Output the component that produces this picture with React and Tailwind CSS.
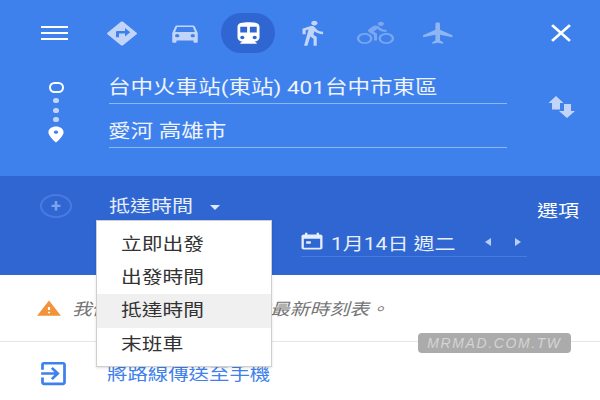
const P = {
  dir: "M21.71 11.29l-9-9c-.39-.39-1.02-.39-1.41 0l-9 9c-.39.39-.39 1.02 0 1.41l9 9c.39.39 1.02.39 1.41 0l9-9c.39-.38.39-1.01 0-1.41zM14 14.5V12h-4v3H8v-4c0-.55.45-1 1-1h5V7.5l3.5 3.5-3.5 3.5z",
  car: "M18.92 6.01C18.72 5.42 18.16 5 17.5 5h-11c-.66 0-1.21.42-1.42 1.01L3 12v8c0 .55.45 1 1 1h1c.55 0 1-.45 1-1v-1h12v1c0 .55.45 1 1 1h1c.55 0 1-.45 1-1v-8l-2.08-5.99zM6.5 16c-.83 0-1.5-.67-1.5-1.5S5.67 13 6.5 13s1.5.67 1.5 1.5S7.33 16 6.5 16zm11 0c-.83 0-1.5-.67-1.5-1.5s.67-1.5 1.5-1.5 1.5.67 1.5 1.5-.67 1.5-1.5 1.5zM5 11l1.5-4.5h11L19 11H5z",
  train: "M12 2c-4.42 0-8 .5-8 4v9.5C4 17.43 5.57 19 7.5 19L6 20.5v.5h12v-.5L16.5 19c1.93 0 3.5-1.57 3.5-3.5V6c0-3.5-3.58-4-8-4zM7.5 17c-.83 0-1.5-.67-1.5-1.5S6.67 14 7.5 14s1.5.67 1.5 1.5S8.33 17 7.5 17zm3.5-6H6V6h5v5zm5.5 6c-.83 0-1.5-.67-1.5-1.5s.67-1.5 1.5-1.5 1.5.67 1.5 1.5-.67 1.5-1.5 1.5zm1.5-6h-5V6h5v5z",
  walk: "M13.5 5.5c1.1 0 2-.9 2-2s-.9-2-2-2-2 .9-2 2 .9 2 2 2zM9.8 8.9L7 23h2.1l1.8-8 2.1 2v6h2v-7.5l-2.1-2 .6-3C14.8 12 16.8 13 19 13v-2c-1.9 0-3.5-1-4.3-2.4l-1-1.6c-.4-.6-1-1-1.7-1-.3 0-.5.1-.8.1L6 8.3V13h2V9.6l1.8-.7",
  bike: "M15.5 5.5c1.1 0 2-.9 2-2s-.9-2-2-2-2 .9-2 2 .9 2 2 2zM5 12c-2.8 0-5 2.2-5 5s2.2 5 5 5 5-2.2 5-5-2.2-5-5-5zm0 8.5c-1.9 0-3.5-1.6-3.5-3.5s1.6-3.5 3.5-3.5 3.5 1.6 3.5 3.5-1.6 3.5-3.5 3.5zm5.8-10l2.4-2.4.8.8c1.3 1.3 3 2.1 5.1 2.1V9c-1.5 0-2.7-.6-3.6-1.5l-1.9-1.9c-.5-.4-1-.6-1.6-.6s-1.1.2-1.4.6L7.8 8.4c-.4.4-.6.9-.6 1.4 0 .6.2 1.1.6 1.4L11 14v5h2v-6.2l-2.2-2.3zM19 12c-2.8 0-5 2.2-5 5s2.2 5 5 5 5-2.2 5-5-2.2-5-5-5zm0 8.5c-1.9 0-3.5-1.6-3.5-3.5s1.6-3.5 3.5-3.5 3.5 1.6 3.5 3.5-1.6 3.5-3.5 3.5z",
  flight: "M21 16v-2l-8-5V3.5c0-.83-.67-1.5-1.5-1.5S10 2.67 10 3.5V9l-8 5v2l8-2.5V19l-2 1.5V22l3.5-1 3.5 1v-1.5L13 19v-5.5l8 2.5z",
  close: "M19 6.41L17.59 5 12 10.59 6.41 5 5 6.41 10.59 12 5 17.59 6.41 19 12 13.41 17.59 19 19 17.59 13.41 12z",
  warn: "M1 21h22L12 2 1 21zm12-3h-2v-2h2v2zm0-4h-2v-4h2v4z",
  send: "M10.09 15.59L11.5 17l5-5-5-5-1.41 1.41L12.67 11H3v2h9.67l-2.58 2.59zM19 3H5c-1.11 0-2 .9-2 2v4h2V5h14v14H5v-4H3v4c0 1.1.89 2 2 2h14c1.1 0 2-.9 2-2V5c0-1.1-.9-2-2-2z",
  cal: "M19 3h-1V1h-2v2H8V1H6v2H5c-1.11 0-1.99.9-1.99 2L3 19c0 1.1.89 2 2 2h14c1.1 0 2-.9 2-2V5c0-1.1-.9-2-2-2zm0 16H5V8h14v11zM7 11h4v3H7z",
  pin: "M12 2C8.13 2 5 5.13 5 9c0 5.25 7 13 7 13s7-7.75 7-13c0-3.87-3.13-7-7-7zm0 9c-1.1 0-2-.9-2-2s.9-2 2-2 2 .9 2 2-.9 2-2 2z",
};

function Icon({ d, className }) {
  return (
    <svg viewBox="0 0 24 24" preserveAspectRatio="none" fill="currentColor" className={className}>
      <path d={d} />
    </svg>
  );
}

function Txt({ className = "", children }) {
  return (
    <span className={"inline-block origin-left scale-x-[1.2] whitespace-nowrap " + className}>{children}</span>
  );
}

function Mode({ d, w, h, className, active }) {
  return (
    <div className="w-[63.4px] h-[40px] flex items-center justify-center">
      {active ? (
        <div className="w-[54px] h-[40px] rounded-full bg-[#2f66d2] flex items-center justify-center">
          <Icon d={d} className={w + " " + h + " " + className} />
        </div>
      ) : (
        <Icon d={d} className={w + " " + h + " " + className} />
      )}
    </div>
  );
}

export default function App() {
  return (
    <div className="relative w-[600px] h-[400px] overflow-hidden bg-white font-['Roboto','Noto_Sans_CJK_TC',sans-serif]">
      <header className="h-[176px] bg-[#3f81ec] flex flex-col">
        <div className="flex items-center h-[40px] mt-[13px] pl-[41px]">
          <div className="w-[27px] flex flex-col gap-[4px]">
            <div className="h-[2px] bg-white" />
            <div className="h-[2px] bg-white" />
            <div className="h-[2px] bg-white" />
          </div>
          <div className="flex ml-[22px]">
            <Mode d={P.dir} w="w-[36px]" h="h-[29px]" className="text-[#c2d5f8]" />
            <Mode d={P.car} w="w-[34px]" h="h-[26px]" className="text-[#c2d5f8]" />
            <Mode d={P.train} w="w-[33px]" h="h-[27px]" className="text-white" active />
            <Mode d={P.walk} w="w-[38px]" h="h-[28px]" className="text-[#c2d5f8]" />
            <Mode d={P.bike} w="w-[37px]" h="h-[26px]" className="text-[#7ba7f1]" />
            <Mode d={P.flight} w="w-[37px]" h="h-[26px]" className="text-[#8fb5f3]" />
          </div>
          <Icon d={P.close} className="w-[34px] h-[30px] ml-[74px] text-white" />
        </div>
        <div className="flex mt-[7px]">
          <div className="w-[18px] ml-[47px] pt-[22px] flex flex-col items-center">
            <div className="w-[15px] h-[11px] rounded-full border-[2.5px] border-white" />
            <div className="mt-[5px] w-[6px] h-[5px] rounded-full bg-[#c2d5f8]" />
            <div className="mt-[5px] w-[6px] h-[5px] rounded-full bg-[#c2d5f8]" />
            <div className="mt-[4px] w-[6px] h-[5px] rounded-full bg-[#c2d5f8]" />
            <Icon d={P.pin} className="w-[26px] h-[19px] mt-[3px] text-white shrink-0" />
          </div>
          <div className="ml-[44px] w-[398px] flex flex-col">
            <div className="h-[44px] border-b border-[#8fb5f3] flex items-end text-[#eef3fd] text-[18.8px] leading-[30px]">
              <Txt className="-ml-px">台中火車站(東站) 401台中市東區</Txt>
            </div>
            <div className="h-[44px] border-b border-[#8fb5f3] flex items-end text-[#eef3fd] text-[18.8px] leading-[30px]">
              <Txt className="-ml-px">愛河 高雄市</Txt>
            </div>
          </div>
          <svg viewBox="0 0 27 22" className="w-[27px] h-[22px] ml-[41px] mt-[36px] text-[#c2d5f8]" fill="currentColor">
            <path d="M8 0l7.500 7H12v6.500H4V7H.5zM19 22l8-7h-4V8h-7v7h-5z" />
          </svg>
        </div>
      </header>

      <section className="h-[99px] bg-[#2f66d2] flex items-start">
        <div className="ml-[40px] mt-[18px] w-[32px] h-[24px] rounded-[50%] border-2 border-[#4a7ade] flex items-center justify-center text-[#7fa3ea] text-[18px] leading-none font-bold">
          +
        </div>
        <div className="ml-[37px] mt-[16px] w-[99px] text-[#e6edfb] text-[17.5px] leading-[28px]">
          <Txt>抵達時間</Txt>
        </div>
        <div className="mt-[29px] w-0 h-0 border-x-[5px] border-x-transparent border-t-[5px] border-t-[#dfe8fa] ml-[2px]" />
        <div className="ml-[81px] mt-[52px] w-[226px] h-[29px] border-b border-[#4a7ade] flex items-center text-[#e6edfb]">
          <Icon d={P.cal} className="-ml-[3px] w-[28px] h-[20px] shrink-0" />
          <div className="ml-[5px] w-[136px] text-[17.500px] leading-[24px] mt-[3px]">
            <Txt>1月14日 週二</Txt>
          </div>
          <div className="ml-[18px] w-0 h-0 border-y-[4px] border-y-transparent border-r-[6px] border-r-[#b9cdf5]" />
          <div className="ml-[24px] w-0 h-0 border-y-[4px] border-y-transparent border-l-[6px] border-l-[#b9cdf5]" />
        </div>
        <div className="ml-[10px] mt-[22px] text-white text-[17.5px] leading-[26px]">
          <Txt>選項</Txt>
        </div>
      </section>

      <div className="h-[67px] border-b border-[#e5e5e5] flex items-center">
        <Icon d={P.warn} className="ml-[36px] w-[26px] h-[19px] text-[#f2933a]" />
        <div className="ml-[10px] mt-[3px] italic text-[#757575] text-[16.5px] leading-[24px]">
          <Txt>我們未取得這條路線的最新時刻表。</Txt>
        </div>
      </div>

      <div className="h-[57px] flex items-start pt-[16px]">
        <Icon d={P.send} className="ml-[37px] w-[33px] h-[31px] text-[#3f81ec] shrink-0" />
        <div className="ml-[37px] mt-[3px] text-[#3f81ec] text-[17px] leading-[26px]">
          <Txt>將路線傳送至手機</Txt>
        </div>
      </div>

      <ul className="absolute left-[96px] top-[220px] w-[176px] h-[147px] bg-white border border-[#cfcfcf] shadow-sm py-[7px] text-[#333333] text-[17.3px]">
        <li className="h-[33px] pl-[24px] flex items-center"><Txt>立即出發</Txt></li>
        <li className="h-[33px] pl-[24px] flex items-center"><Txt>出發時間</Txt></li>
        <li className="h-[34px] pl-[24px] flex items-center bg-[#f0f0f0]"><Txt>抵達時間</Txt></li>
        <li className="h-[33px] pl-[24px] flex items-center"><Txt>末班車</Txt></li>
      </ul>

      <div className="absolute left-[418px] top-[333px] w-[153px] h-[20px] rounded-[4px] bg-[#ababab] text-center text-[#d4d4d4] italic text-[14px] leading-[20px] tracking-[1.6px] font-['Liberation_Sans',sans-serif]">
        MRMAD.COM.TW
      </div>
    </div>
  );
}
